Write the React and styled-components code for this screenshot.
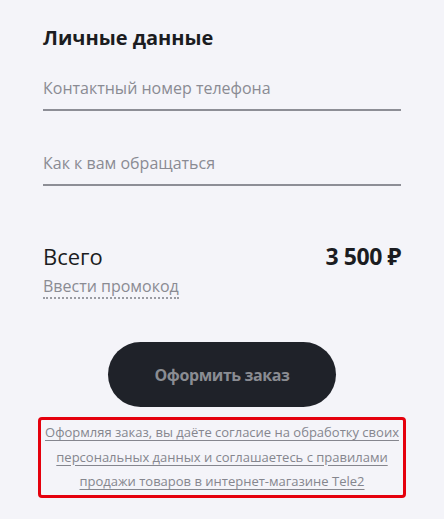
import styled, { createGlobalStyle } from 'styled-components';

const GlobalStyle = createGlobalStyle`
  html, body {
    margin: 0;
    padding: 0;
    background: #f4f4f9;
    font-family: "Open Sans", "Noto Sans", sans-serif;
  }
`;

export default function App() {
  return (
    <>
      <GlobalStyle />
      <Page>
        <Title>Личные данные</Title>
        <Field>
          <FieldInput placeholder="Контактный номер телефона" />
        </Field>
        <Field>
          <FieldInput placeholder="Как к вам обращаться" />
        </Field>
        <TotalRow>
          <TotalLeft>
            <TotalLabel>Всего</TotalLabel>
            <PromoLink>Ввести промокод</PromoLink>
          </TotalLeft>
          <TotalPrice>3 500 ₽</TotalPrice>
        </TotalRow>
        <ButtonWrap>
          <OrderButton>Оформить заказ</OrderButton>
        </ButtonWrap>
        <Consent>
          <ConsentText>
            Оформляя заказ, вы даёте согласие на обработку своих персональных данных и соглашаетесь с правилами продажи товаров в интернет-магазине Tele2
          </ConsentText>
        </Consent>
      </Page>
    </>
  );
}

const Page = styled.div`
  width: 444px;
  height: 519px;
  box-sizing: border-box;
  padding: 24px 43px 0 43px;
  display: flex;
  flex-direction: column;
`;

const Title = styled.h1`
  margin: 0;
  font-size: 20px;
  font-weight: 700;
  color: #1b1c21;
  line-height: 28px;
`;

const Field = styled.div`
  margin-top: 24px;
  border-bottom: 2px solid #8d8e96;
  padding-bottom: 9px;
  & + & {
    margin-top: 40px;
  }
`;

const FieldInput = styled.input`
  display: block;
  width: 100%;
  border: none;
  background: transparent;
  outline: none;
  padding: 0;
  font-family: inherit;
  font-size: 16px;
  line-height: 24px;
  height: 24px;
  color: #1b1c21;
  &::placeholder {
    color: #8a8b93;
  }
`;

const TotalRow = styled.div`
  margin-top: 55px;
  display: flex;
  justify-content: space-between;
  align-items: flex-start;
`;

const TotalLeft = styled.div`
  display: flex;
  flex-direction: column;
`;

const TotalLabel = styled.div`
  font-size: 22px;
  line-height: 30px;
  color: #1b1c21;
`;

const PromoLink = styled.span`
  align-self: flex-start;
  margin-top: 4px;
  font-size: 16px;
  line-height: 22px;
  color: #8a8b93;
  border-bottom: 2px dotted #9a9ba2;
`;

const TotalPrice = styled.div`
  font-size: 23px;
  font-weight: 700;
  line-height: 30px;
  letter-spacing: -0.4px;
  color: #1b1c21;
`;

const ButtonWrap = styled.div`
  margin-top: 43px;
  display: flex;
  justify-content: center;
`;

const OrderButton = styled.button`
  width: 228px;
  height: 65px;
  border: none;
  border-radius: 33px;
  background: #1f2229;
  color: #8a8c92;
  font-family: inherit;
  font-size: 16px;
  font-weight: 700;
  letter-spacing: -0.4px;
  cursor: pointer;
`;

const Consent = styled.div`
  margin: 10px -5px 0 -5px;
  border: 3px solid #e5000d;
  border-radius: 4px;
  padding: 0 4px 1px;
  text-align: center;
`;

const ConsentText = styled.span`
  font-size: 13px;
  line-height: 23.5px;
  color: #85868e;
  text-decoration: underline;
  text-underline-offset: 3px;
`;
